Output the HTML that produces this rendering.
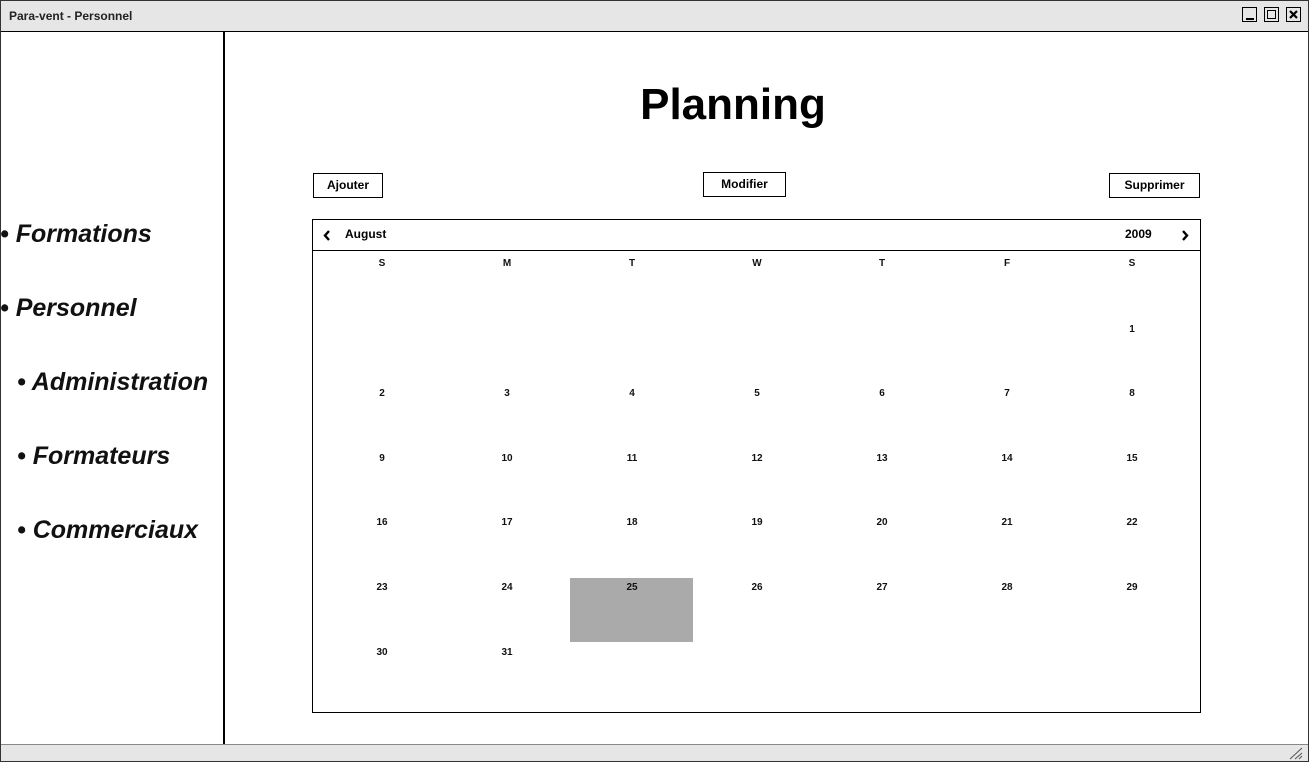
<!DOCTYPE html>
<html><head><style>
*{margin:0;padding:0;box-sizing:border-box}
body{width:1309px;height:762px;position:relative;background:#fff;font-family:"Liberation Sans",Arial,sans-serif;overflow:hidden}
.a{position:absolute}
.frame{left:0;top:0;width:1309px;height:762px;border:1px solid #333}
.title{left:1px;top:1px;width:1307px;height:31px;background:#e6e6e6;border-bottom:1px solid #000}
.tt{left:9px;top:9px;font-size:12px;font-weight:bold;color:#222}
.wb{top:7px;width:15px;height:15px;border:1px solid #000;background:#e6e6e6}
.bottom{left:1px;top:744px;width:1307px;height:17px;background:#e6e6e6;border-top:1px solid #888}
.side{left:223px;top:32px;width:2px;height:713px;background:#000}
.nav{font-size:25px;font-weight:bold;font-style:italic;color:#111;line-height:30px}
.btn{border:1px solid #000;height:25px;font-size:12px;font-weight:bold;text-align:center;line-height:23px;background:#fff}
.cal{left:312px;top:219px;width:889px;height:494px;border:1px solid #000}
.c{position:absolute;width:125px;text-align:center;font-size:10px;font-weight:bold;color:#111}
</style></head><body>
<div class="a frame"></div>
<div class="a title"></div>
<div class="a tt">Para-vent - Personnel</div>
<div class="a wb" style="left:1242px"><div class="a" style="left:3px;top:10px;width:8px;height:2px;background:#000"></div></div>
<div class="a wb" style="left:1264px"><div class="a" style="left:2px;top:2px;width:9px;height:9px;border:1px solid #000"></div></div>
<div class="a wb" style="left:1286px"><svg class="a" style="left:2px;top:2px" width="9" height="9"><path d="M1 1L8 8M8 1L1 8" stroke="#000" stroke-width="2.2"/></svg></div>
<div class="a side"></div>
<div class="a bottom"></div>
<svg class="a" style="left:1288px;top:746px" width="16" height="14"><path d="M2 13L14 2M7 13L14 7M11 13L14 10" stroke="#555" stroke-width="1"/></svg>

<div class="a nav" style="left:0;top:219px">• Formations</div>
<div class="a nav" style="left:0;top:293px">• Personnel</div>
<div class="a nav" style="left:17px;top:367px">• Administration</div>
<div class="a nav" style="left:17px;top:441px">• Formateurs</div>
<div class="a nav" style="left:17px;top:515px">• Commerciaux</div>

<div class="a" style="left:225px;top:80px;width:1016px;text-align:center;font-size:44px;font-weight:bold">Planning</div>
<div class="a btn" style="left:313px;top:173px;width:70px">Ajouter</div>
<div class="a btn" style="left:703px;top:172px;width:83px">Modifier</div>
<div class="a btn" style="left:1109px;top:173px;width:91px">Supprimer</div>

<div class="a cal">
<div class="a" style="left:0;top:30px;width:887px;height:1px;background:#000"></div>
<svg class="a" style="left:10px;top:10px" width="8" height="11"><path d="M6 1L2 5.5L6 10" stroke="#000" stroke-width="2.4" fill="none"/></svg>
<div class="a" style="left:32px;top:7px;font-size:12px;font-weight:bold">August</div>
<div class="a" style="left:812px;top:7px;font-size:12px;font-weight:bold">2009</div>
<svg class="a" style="left:868px;top:10px" width="8" height="11"><path d="M2 1L6 5.5L2 10" stroke="#000" stroke-width="2.4" fill="none"/></svg>
<div class="a" style="left:257px;top:358px;width:123px;height:64px;background:#aaa"></div>
</div>
<div id="g"></div>
<script>
var h='',L='SMTWTFS';
for(var i=0;i<7;i++)h+='<div class="c" style="left:'+(319.5+i*125)+'px;top:258px">'+L[i]+'</div>';
var ys=[324,388,453,517,582,647];
for(var d=1;d<=31;d++){var p=d+5,r=Math.floor(p/7),c=p%7;h+='<div class="c" style="left:'+(319.5+c*125)+'px;top:'+ys[r]+'px">'+d+'</div>';}
document.getElementById('g').innerHTML=h;
</script>
</body></html>
